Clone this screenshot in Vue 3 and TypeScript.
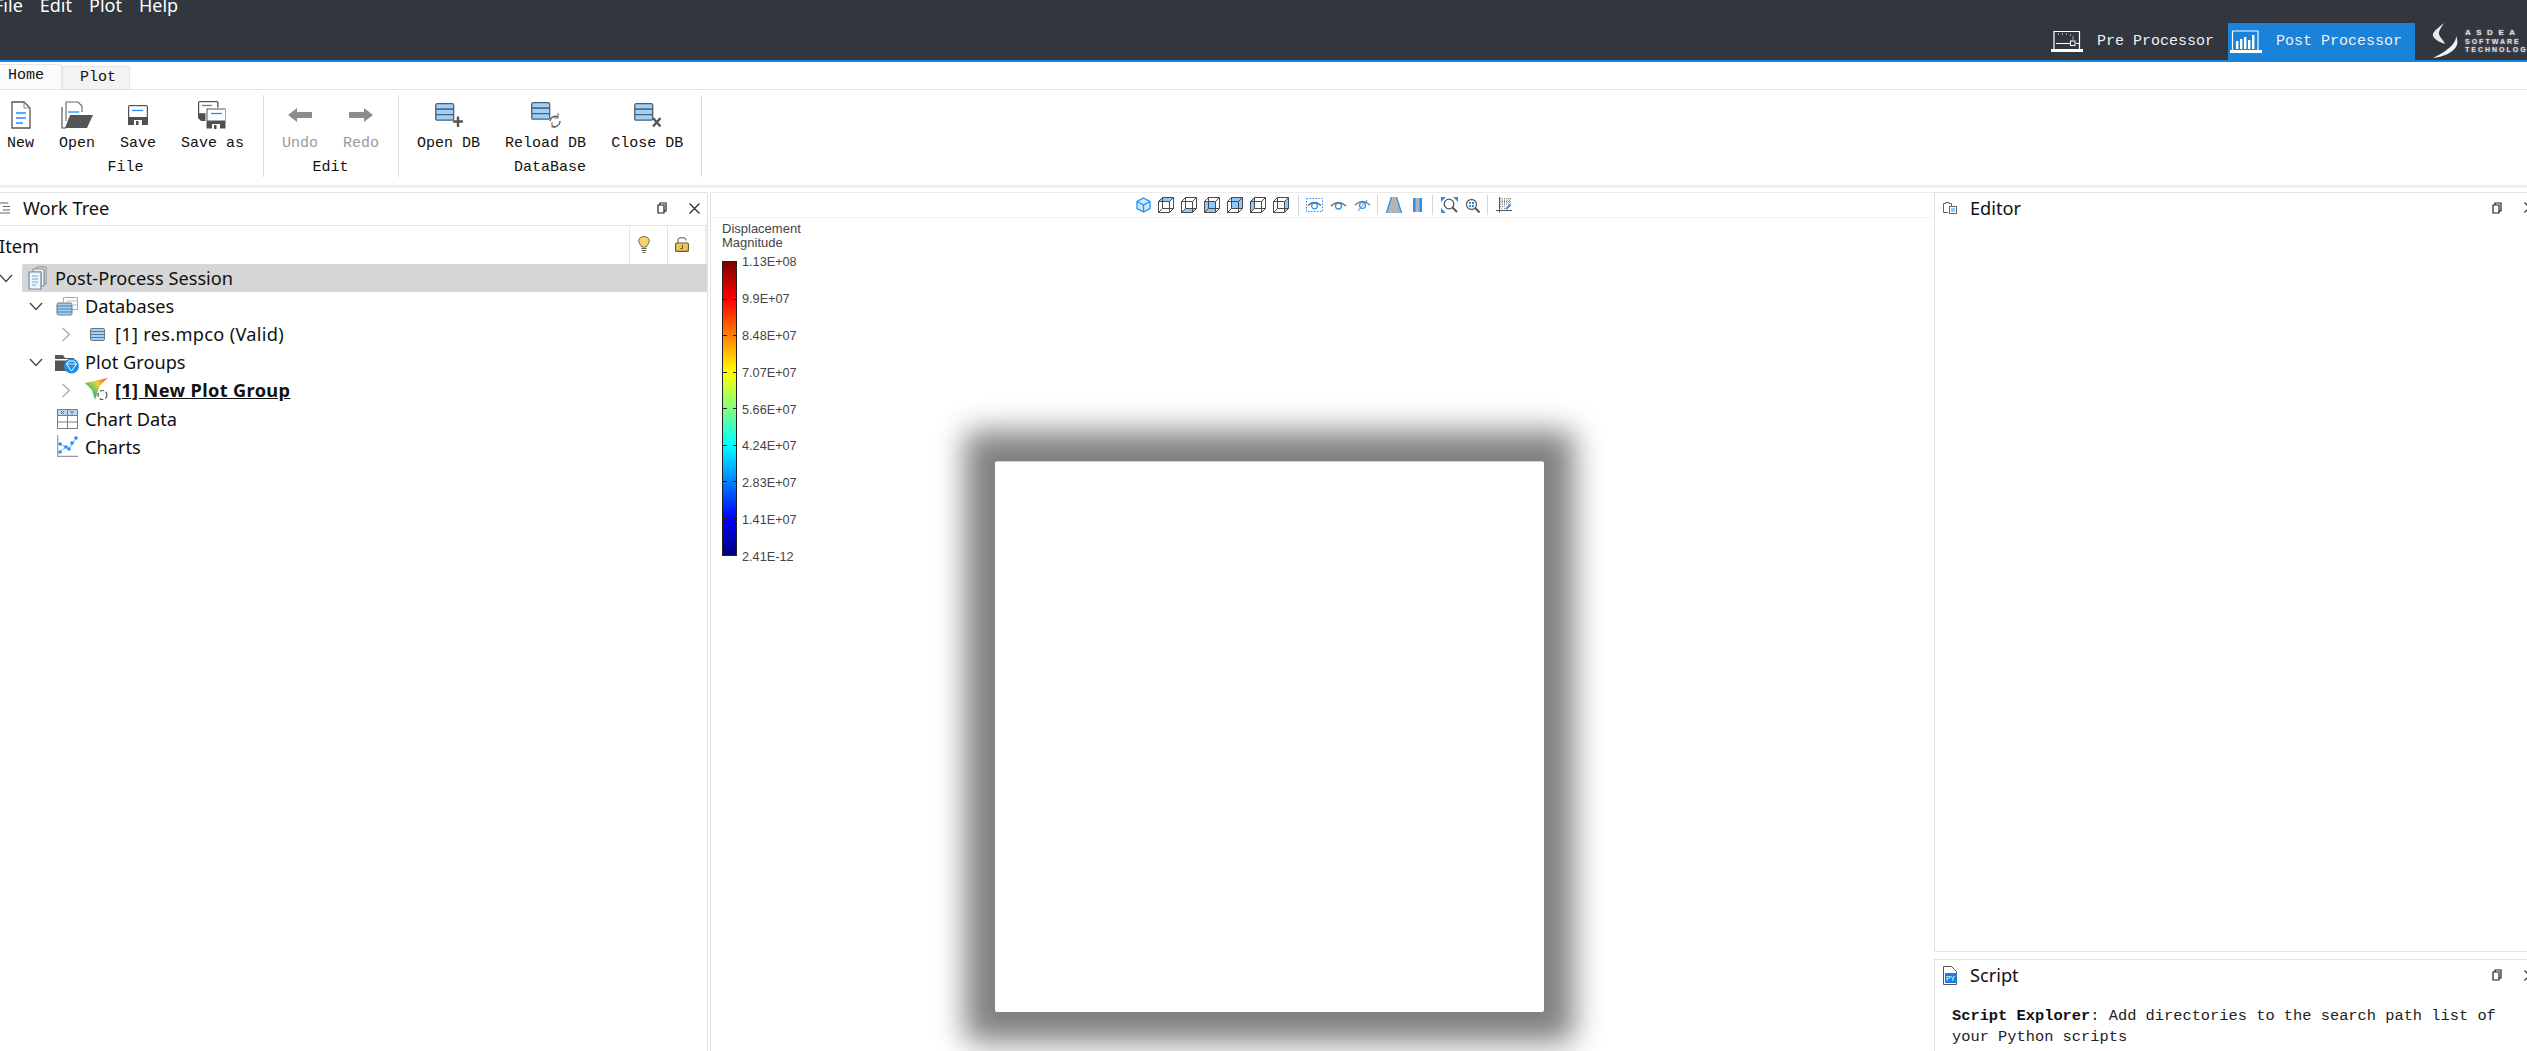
<script setup lang="ts">
const legend = ['1.13E+08', '9.9E+07', '8.48E+07', '7.07E+07', '5.66E+07', '4.24E+07', '2.83E+07', '1.41E+07', '2.41E-12']
const faces: string[] = [
  '4.500,0.500 15.500,0.500 11.500,4.500 0.500,4.500',
  '0.500,15.500 11.500,15.500 15.500,11.500 4.500,11.500',
  '0.500,4.500 11.500,4.500 11.500,15.500 0.500,15.500',
  '4.500,0.500 15.500,0.500 15.500,11.500 4.500,11.500',
  '0.500,4.500 4.500,0.500 4.500,11.500 0.500,15.500',
  '11.500,4.500 15.500,0.500 15.500,11.500 11.500,15.500',
]
</script>

<template>
  <div class="app">
    <header class="topbar">
      <nav class="menu"><span>File</span><span>Edit</span><span>Plot</span><span>Help</span></nav>
      <div class="modes">
        <div class="mode">
          <svg width="32" height="22" viewBox="0 0 32 22" class="mode-icon">
            <path d="M3 19V1.500H28.500V19" fill="none" stroke="#fff" stroke-width="1.200" />
            <path d="M0 19H32V22H0Z M4 19h4v1H4Z" fill="#fff" />
            <path d="M5 13.500H19M25 13.500H28" stroke="#fff" stroke-width="1" />
            <rect x="19.500" y="11" width="4.500" height="4.500" fill="none" stroke="#fff" stroke-width="1" />
            <path d="M7 4h1M11 4h1M15 4h1M19 5h1M21.500 7h1M21.500 9h1" stroke="#fff" stroke-width="1" />
          </svg>
          <span>Pre Processor</span>
        </div>
        <div class="mode active">
          <svg width="32" height="23" viewBox="0 0 32 23" class="mode-icon">
            <path d="M2.500 20V1H28V20" fill="none" stroke="#fff" stroke-width="1.200" />
            <path d="M0 20H32V23H0Z" fill="#fff" />
            <path d="M6 11h2.400v8H6Z M10 9h2.400v10H10Z M14 7h2.400v12H14Z M18 10h2.400v9H18Z M22 5h2.400v14H22Z" fill="#fff" />
          </svg>
          <span>Post Processor</span>
        </div>
        <div class="logo">
          <svg width="26" height="36" viewBox="0 0 26 36" class="logo-mark">
            <path d="M12 0C5 6 0 9 1 13C2 16 7 19 13 21C11 16 6 13 7 9C8 6 10 3 12 0Z" fill="#e8e8e8" />
            <path d="M24 13C25 20 14 29 1 35C10 34 22 30 25 22C26 18 25 15 24 13Z" fill="#f2f2f2" />
          </svg>
          <div class="logo-text">
            <span class="l1">ASDEA</span>
            <span class="l2">SOFTWARE</span>
            <span class="l2">TECHNOLOGY</span>
          </div>
        </div>
      </div>
    </header>

    <div class="tabs">
      <div class="tab on">Home</div>
      <div class="tab">Plot</div>
    </div>

    <section class="ribbon">
      <div class="group first">
        <div class="btns">
          <div class="btn">
            <div class="ico">
              <svg width="20" height="28" viewBox="0 0 20 28">
                <path d="M1 1H13L19 7V27H1Z" fill="#fff" stroke="#555" stroke-width="1.300" />
                <path d="M13 1V7H19" fill="none" stroke="#888" />
                <path d="M5 12H15M5 17H15M5 22H12" stroke="#1e90ff" stroke-width="1.300" />
              </svg>
            </div>
            <span>New</span>
          </div>
          <div class="btn">
            <div class="ico">
              <svg width="32" height="28" viewBox="0 0 32 28">
                <path d="M1 6V27H5" fill="none" stroke="#555" stroke-width="1.200" />
                <path d="M5 20V1H17L21 5V11" fill="#fff" stroke="#666" stroke-width="1.100" />
                <path d="M7 11H18" stroke="#1e90ff" stroke-width="1.300" />
                <path d="M9 14H32L26 27H4Z" fill="#555" />
              </svg>
            </div>
            <span>Open</span>
          </div>
          <div class="btn">
            <div class="ico">
              <svg width="20" height="20" viewBox="0 0 20 20">
                <path d="M0 1.500Q0 0 1.500 0H18.500Q20 0 20 1.500V20H0Z" fill="#505050" />
                <rect x="1.200" y="1.200" width="17.600" height="10.800" fill="#fff" />
                <path d="M4 5.500H15" stroke="#1e90ff" stroke-width="1.300" />
                <rect x="6" y="15" width="8" height="5" fill="#fff" />
                <rect x="8" y="16" width="2.500" height="4" fill="#505050" />
              </svg>
            </div>
            <span>Save</span>
          </div>
          <div class="btn">
            <div class="ico">
              <svg width="29" height="28" viewBox="0 0 29 28">
                <path d="M0 1.500Q0 0 1.500 0H19Q20.500 0 20.500 1.500V20H3L0 17Z" fill="#505050" />
                <rect x="1.200" y="1.200" width="18" height="11" fill="#fff" />
                <path d="M4 4.500H14" stroke="#1e90ff" stroke-width="1.300" />
                <path d="M8 8.500Q8 7 9.500 7H28V28H8Z" fill="#505050" stroke="#fff" stroke-width="1" />
                <rect x="9.500" y="8.500" width="17.500" height="11" fill="#fff" />
                <path d="M13 12.500H24" stroke="#1e90ff" stroke-width="1.300" />
                <rect x="14" y="23" width="8" height="5" fill="#fff" />
                <rect x="16" y="24" width="2.500" height="4" fill="#505050" />
              </svg>
            </div>
            <span>Save as</span>
          </div>
        </div>
        <div class="group-name">File</div>
      </div>

      <div class="group">
        <div class="btns">
          <div class="btn off">
            <div class="ico">
              <svg width="24" height="14" viewBox="0 0 24 14"><path d="M0 7L9 0V4H24V10H9V14Z" fill="#8c8c8c" /></svg>
            </div>
            <span>Undo</span>
          </div>
          <div class="btn off">
            <div class="ico">
              <svg width="24" height="14" viewBox="0 0 24 14"><path d="M24 7L15 0V4H0V10H15V14Z" fill="#8c8c8c" /></svg>
            </div>
            <span>Redo</span>
          </div>
        </div>
        <div class="group-name">Edit</div>
      </div>

      <div class="group last">
        <div class="btns">
          <div class="btn">
            <div class="ico">
              <svg width="28" height="24" viewBox="0 0 28 24">
                <rect x="0.700" y="0.700" width="18" height="5.500" rx="1.500" fill="#9ed0fa" stroke="#4f6070" stroke-width="1.300" />
                <rect x="0.700" y="6.200" width="18" height="5.500" fill="#9ed0fa" stroke="#4f6070" stroke-width="1.300" />
                <rect x="0.700" y="11.700" width="18" height="5.500" rx="1.500" fill="#9ed0fa" stroke="#4f6070" stroke-width="1.300" />
                <path d="M18 18.500H28M23 13.500V24" stroke="#555" stroke-width="2.400" />
              </svg>
            </div>
            <span>Open DB</span>
          </div>
          <div class="btn">
            <div class="ico">
              <svg width="30" height="26" viewBox="0 0 30 26">
                <rect x="0.700" y="0.700" width="18" height="5.500" rx="1.500" fill="#9ed0fa" stroke="#4f6070" stroke-width="1.300" />
                <rect x="0.700" y="6.200" width="18" height="5.500" fill="#9ed0fa" stroke="#4f6070" stroke-width="1.300" />
                <rect x="0.700" y="11.700" width="18" height="5.500" rx="1.500" fill="#9ed0fa" stroke="#4f6070" stroke-width="1.300" />
                <path d="M19 19A5.500 5.500 0 0 1 27 15M29 19A5.500 5.500 0 0 1 21 24" fill="none" stroke="#666" stroke-width="1.500" />
                <path d="M27 11V16H23M21 20V25H25" fill="none" stroke="#666" stroke-width="1" />
              </svg>
            </div>
            <span>Reload DB</span>
          </div>
          <div class="btn">
            <div class="ico">
              <svg width="27" height="24" viewBox="0 0 27 24">
                <rect x="0.700" y="0.700" width="18" height="5.500" rx="1.500" fill="#9ed0fa" stroke="#4f6070" stroke-width="1.300" />
                <rect x="0.700" y="6.200" width="18" height="5.500" fill="#9ed0fa" stroke="#4f6070" stroke-width="1.300" />
                <rect x="0.700" y="11.700" width="18" height="5.500" rx="1.500" fill="#9ed0fa" stroke="#4f6070" stroke-width="1.300" />
                <path d="M19 15L26.500 23.500M26.500 15L19 23.500" stroke="#555" stroke-width="2.400" />
              </svg>
            </div>
            <span>Close DB</span>
          </div>
        </div>
        <div class="group-name">DataBase</div>
      </div>
    </section>

    <main class="main">
      <section class="panel tree-panel">
        <div class="panel-head">
          <svg class="head-ico" width="22" height="12" viewBox="0 0 22 12">
            <path d="M11 1H19M14 4.500H21M14 8H21M11 11H21" stroke="#666" stroke-width="1" />
          </svg>
          <span class="panel-title">Work Tree</span>
          <svg class="restore" width="10" height="12" viewBox="0 0 10 12">
            <path d="M3 3V1H9V9H7M1 3H7V11H1Z" fill="none" stroke="#222" stroke-width="1.200" />
          </svg>
          <svg class="close" width="11" height="11" viewBox="0 0 11 11"><path d="M0.500 0.500L10.500 10.500M10.500 0.500L0.500 10.500" stroke="#222" stroke-width="1.100" /></svg>
        </div>
        <div class="col-head">
          <div class="col-item">Item</div>
          <div class="col-cell">
            <svg width="12" height="17" viewBox="0 0 12 17">
              <path d="M6 0.600C2.500 0.600 0.700 2.600 0.700 5C0.700 7.500 3 8.500 3.500 11H8.500C9 8.500 11.300 7.500 11.300 5C11.300 2.600 9.500 0.600 6 0.600Z" fill="#f7d36b" stroke="#6b6b4f" stroke-width="1" />
              <path d="M3.500 12.500H8.500M3.500 14.500H8.500M4.500 16.500H7.500" stroke="#666" stroke-width="1" />
            </svg>
          </div>
          <div class="col-cell">
            <svg width="14" height="15" viewBox="0 0 14 15">
              <path d="M3 6V3.500C3 1.500 5 0.600 7 0.600C9 0.600 11 1.500 11 3.500" fill="none" stroke="#777" stroke-width="1.200" />
              <rect x="0.600" y="6" width="12.800" height="8.400" rx="1" fill="#ecc55e" stroke="#6b5a2a" stroke-width="1.100" />
              <path d="M7.500 8V11.500H5.500" fill="none" stroke="#5a4a20" stroke-width="1" />
            </svg>
          </div>
        </div>

        <div class="row d0">
          <svg class="chev" width="14" height="9" viewBox="0 0 14 9"><path d="M1 1L7 7.500L13 1" fill="none" stroke="#444" stroke-width="1.300" /></svg>
          <div class="row-body selected">
            <svg class="node-ico" width="24" height="24" viewBox="0 0 24 24">
              <path d="M13 1H22V18H20V4H13Z" fill="#f4f4f4" stroke="#7c8894" stroke-width="1" />
              <path d="M9 3H20V20H17V6H9Z" fill="#f4f4f4" stroke="#7c8894" stroke-width="1" />
              <path d="M5 6H17V23H5Z" fill="#eef5fb" stroke="#6f8ca8" stroke-width="1.200" />
              <path d="M8 10H14M8 13H14M8 16H14M8 19H12" stroke="#6fa8dc" stroke-width="1" />
            </svg>
            <span>Post-Process Session</span>
          </div>
        </div>

        <div class="row d1">
          <svg class="chev" width="14" height="9" viewBox="0 0 14 9"><path d="M1 1L7 7.500L13 1" fill="none" stroke="#444" stroke-width="1.300" /></svg>
          <div class="row-body">
            <svg class="node-ico" width="24" height="24" viewBox="0 0 24 24">
              <path d="M9.500 8V3.500H23.500V15.500H18" fill="#fff" stroke="#aaa" stroke-width="1" />
              <path d="M13 7H23M19 11H23" stroke="#bbb" stroke-width="1" />
              <rect x="3" y="9" width="15" height="12" rx="1.500" fill="#9ed0fa" stroke="#64788c" stroke-width="1" />
              <path d="M3 12H18M3 15H18M3 18H18" stroke="#64788c" stroke-width="1" />
            </svg>
            <span>Databases</span>
          </div>
        </div>

        <div class="row d2">
          <svg class="chev" width="9" height="15" viewBox="0 0 9 15"><path d="M1 1L8 7.500L1 14" fill="none" stroke="#aaa" stroke-width="1.300" /></svg>
          <div class="row-body">
            <svg class="node-ico" width="24" height="24" viewBox="0 0 24 24">
              <rect x="6.500" y="6.500" width="14" height="12" rx="1.500" fill="#9ed0fa" stroke="#64788c" stroke-width="1" />
              <path d="M6.500 9.500H20.500M6.500 12.500H20.500M6.500 15.500H20.500" stroke="#64788c" stroke-width="1" />
            </svg>
            <span class="wide">[1] res.mpco (Valid)</span>
          </div>
        </div>

        <div class="row d1">
          <svg class="chev" width="14" height="9" viewBox="0 0 14 9"><path d="M1 1L7 7.500L13 1" fill="none" stroke="#444" stroke-width="1.300" /></svg>
          <div class="row-body">
            <svg class="node-ico" width="25" height="24" viewBox="0 0 25 24">
              <path d="M1 5H9L11 8H20V21H1Z" fill="#555" />
              <path d="M1 9H20V10.500H1Z" fill="#fff" />
              <circle cx="17.500" cy="16" r="7.500" fill="#1e90e8" />
              <path d="M12.500 14L15 11H20L22.500 14L17.500 21Z" fill="none" stroke="#fff" stroke-width="1" />
              <path d="M12.500 14H22.500" stroke="#fff" stroke-width="0.800" />
            </svg>
            <span>Plot Groups</span>
          </div>
        </div>

        <div class="row d2">
          <svg class="chev" width="9" height="15" viewBox="0 0 9 15"><path d="M1 1L8 7.500L1 14" fill="none" stroke="#aaa" stroke-width="1.300" /></svg>
          <div class="row-body">
            <svg class="node-ico" width="24" height="24" viewBox="0 0 24 24">
              <defs>
                <linearGradient id="wing" x1="1" y1="0" x2="0" y2="1">
                  <stop offset="0" stop-color="#f04030" />
                  <stop offset="0.350" stop-color="#f0d040" />
                  <stop offset="0.650" stop-color="#50c060" />
                  <stop offset="1" stop-color="#2080e0" />
                </linearGradient>
              </defs>
              <path d="M1 5L24 0C20 3 17 6 15 10L11 22L8 12Z" fill="url(#wing)" />
              <circle cx="18.500" cy="17" r="4.500" fill="#fff" stroke="#555" stroke-width="1.200" stroke-dasharray="4 2" />
            </svg>
            <span class="bold">[1] New Plot Group</span>
          </div>
        </div>

        <div class="row d1">
          <span class="chev-gap"></span>
          <div class="row-body">
            <svg class="node-ico" width="24" height="24" viewBox="0 0 24 24">
              <rect x="3.500" y="2.500" width="20" height="6" fill="#b9d7f2" />
              <rect x="3.500" y="2.500" width="20" height="19" fill="none" stroke="#7d7d7d" stroke-width="1" />
              <path d="M3.500 8.500H23.500M3.500 15H23.500M13.500 2.500V21.500" stroke="#7d7d7d" stroke-width="1" />
              <path d="M7 4L10 7M10 4L7 7M16 4L18 5.500L20 4M18 5.500V7.500" stroke="#555" stroke-width="0.800" fill="none" />
            </svg>
            <span>Chart Data</span>
          </div>
        </div>

        <div class="row d1">
          <span class="chev-gap"></span>
          <div class="row-body">
            <svg class="node-ico" width="24" height="24" viewBox="0 0 24 24">
              <path d="M3.700 0V21.300H24" fill="none" stroke="#999" stroke-width="1.200" />
              <path d="M6 17L12 12L15 14L22 3M6 9L12 12" fill="none" stroke="#6cb0ea" stroke-width="1" />
              <circle cx="6" cy="17" r="1.800" fill="#1e90ff" />
              <circle cx="6" cy="9" r="1.800" fill="#1e90ff" />
              <circle cx="12" cy="12" r="1.800" fill="#1e90ff" />
              <circle cx="15" cy="14" r="1.800" fill="#1e90ff" />
              <circle cx="18" cy="8" r="1.800" fill="#1e90ff" />
              <circle cx="22" cy="3" r="1.800" fill="#1e90ff" />
            </svg>
            <span>Charts</span>
          </div>
        </div>
      </section>

      <section class="view">
        <div class="view-bar">
          <svg width="15" height="16" viewBox="0 0 15 16" class="vb">
            <path d="M7.500 1L14 4.500V11.500L7.500 15L1 11.500V4.500Z" fill="#cfe6fb" stroke="#2a90ef" stroke-width="1.300" />
            <path d="M1 4.500L7.500 8L14 4.500M7.500 8V15" fill="none" stroke="#2a90ef" stroke-width="1.300" />
          </svg>
          <svg v-for="(f, i) in faces" :key="i" width="16" height="16" viewBox="0 0 16 16" class="vb box">
            <polygon :points="f" fill="#90c8fa" />
            <path d="M0.500 4.500H11.500V15.500H0.500ZM4.500 0.500H15.500V11.500H4.500ZM0.500 4.500L4.500 0.500M11.500 4.500L15.500 0.500M11.500 15.500L15.500 11.500M0.500 15.500L4.500 11.500" fill="none" stroke="#4a4a4a" stroke-width="1" />
          </svg>
          <i class="sep s1"></i>
          <svg width="17" height="14" viewBox="0 0 17 14" class="vb">
            <rect x="0.500" y="0.500" width="16" height="13" fill="none" stroke="#1e90ff" stroke-width="1" stroke-dasharray="1.500 1.500" />
            <path d="M2 7.500Q8.500 1.500 15 7.500" fill="none" stroke="#666" stroke-width="1.200" />
            <circle cx="8.500" cy="8" r="2.800" fill="none" stroke="#2a90ef" stroke-width="1.200" />
          </svg>
          <svg width="17" height="10" viewBox="0 0 17 10" class="vb">
            <path d="M1 6Q8.500 -1 16 6" fill="none" stroke="#666" stroke-width="1.300" />
            <circle cx="8.500" cy="6" r="3" fill="none" stroke="#2a90ef" stroke-width="1.300" />
          </svg>
          <svg width="17" height="12" viewBox="0 0 17 12" class="vb">
            <path d="M1 6Q8.500 -1 16 6" fill="none" stroke="#777" stroke-width="1.200" />
            <circle cx="8.500" cy="6.500" r="3" fill="none" stroke="#2a90ef" stroke-width="1.200" />
            <path d="M4 12L13 1" stroke="#2a90ef" stroke-width="1" />
          </svg>
          <i class="sep s2"></i>
          <svg width="16" height="16" viewBox="0 0 16 16" class="vb road">
            <path d="M5 0H11L16 16H0Z" fill="#b4b4b4" />
            <path d="M5.500 0L0.500 16M10.500 0L15.500 16" stroke="#2a90ef" stroke-width="1.300" />
          </svg>
          <svg width="9" height="14" viewBox="0 0 9 14" class="vb bar">
            <rect width="9" height="14" fill="#b4b4b4" />
            <rect width="2.500" height="14" fill="#2a90ef" />
            <rect x="6.500" width="2.500" height="14" fill="#2a90ef" />
          </svg>
          <i class="sep s3"></i>
          <svg width="17" height="16" viewBox="0 0 17 16" class="vb">
            <path d="M0 0H5L0 5ZM12 0H17V5ZM0 11L5 16H0Z" fill="#2a90ef" />
            <circle cx="8" cy="7" r="4.800" fill="none" stroke="#555" stroke-width="1.300" />
            <path d="M11.500 10.500L16 15" stroke="#555" stroke-width="2" />
          </svg>
          <svg width="15" height="15" viewBox="0 0 15 15" class="vb">
            <circle cx="6.500" cy="6.500" r="5" fill="none" stroke="#666" stroke-width="1.300" />
            <path d="M10 10L14.500 14.500" stroke="#555" stroke-width="2" />
            <rect x="4" y="4" width="2" height="2" fill="#2a90ef" />
            <rect x="7" y="4" width="2" height="2" fill="#2a90ef" />
            <rect x="4" y="7" width="2" height="2" fill="#2a90ef" />
            <rect x="7" y="7" width="2" height="2" fill="#2a90ef" />
          </svg>
          <i class="sep s4"></i>
          <svg width="16" height="16" viewBox="0 0 16 16" class="vb">
            <path d="M3.500 0V15.500M0 13.500H16" stroke="#555" stroke-width="1" />
            <path d="M6 1V12M8.500 1V12M11 1V7M13.500 1V7M4 2H15M4 4.500H15M4 7H15M4 9.500H9" stroke="#888" stroke-width="1" stroke-dasharray="1 1" />
            <path d="M10 12L14.500 7.500" stroke="#2a90ef" stroke-width="2" />
          </svg>
        </div>
        <div class="canvas">
          <div class="legend">
            <div class="legend-title">Displacement<br />Magnitude</div>
            <div class="legend-body">
              <div class="jet">
                <i v-for="l in legend" :key="l" class="tick"></i>
              </div>
              <div class="legend-labels">
                <span v-for="l in legend" :key="l">{{ l }}</span>
              </div>
            </div>
          </div>
          <div class="sheet"></div>
        </div>
      </section>

      <aside class="side">
        <section class="panel editor">
          <div class="panel-head">
            <svg class="head-ico2" width="14" height="12" viewBox="0 0 14 12">
              <path d="M5 10.500H0.500V1.500H3V0.500H6V1.500H8.500V4" fill="none" stroke="#666" stroke-width="1" />
              <rect x="6.500" y="4.500" width="7" height="7" fill="#fff" stroke="#666" stroke-width="1" />
              <path d="M8 7H12M8 9H12" stroke="#1e90ff" stroke-width="1" />
            </svg>
            <span class="panel-title">Editor</span>
            <svg class="restore" width="10" height="12" viewBox="0 0 10 12">
              <path d="M3 3V1H9V9H7M1 3H7V11H1Z" fill="none" stroke="#222" stroke-width="1.200" />
            </svg>
            <svg class="close" width="11" height="11" viewBox="0 0 11 11"><path d="M0.500 0.500L10.500 10.500M10.500 0.500L0.500 10.500" stroke="#222" stroke-width="1.100" /></svg>
          </div>
        </section>
        <section class="panel script">
          <div class="panel-head">
            <svg class="head-ico2" width="14" height="19" viewBox="0 0 14 19">
              <path d="M0.500 0.500H8.500L13.500 5.500V18.500H0.500Z" fill="#fff" stroke="#555" stroke-width="1" />
              <rect x="2" y="7" width="12" height="10" fill="#1c7fdb" />
              <text x="3" y="15" font-size="7.500" fill="#fff" font-family="Liberation Mono, monospace">PY</text>
            </svg>
            <span class="panel-title">Script</span>
            <svg class="restore" width="10" height="12" viewBox="0 0 10 12">
              <path d="M3 3V1H9V9H7M1 3H7V11H1Z" fill="none" stroke="#222" stroke-width="1.200" />
            </svg>
            <svg class="close" width="11" height="11" viewBox="0 0 11 11"><path d="M0.500 0.500L10.500 10.500M10.500 0.500L0.500 10.500" stroke="#222" stroke-width="1.100" /></svg>
          </div>
          <p class="script-text"><b>Script Explorer</b>: Add directories to the search path list of your Python scripts</p>
        </section>
      </aside>
    </main>
  </div>
</template>

<style>
html, body { margin: 0; background: #fff; overflow: hidden; }
</style>

<style scoped>
.app {
  width: 2551px;
  height: 1051px;
  margin-left: -12px;
  display: flex;
  flex-direction: column;
  overflow: hidden;
  background: #fff;
  color: #111;
  font-family: "Noto Sans", sans-serif;
}
.topbar {
  height: 60px;
  flex: none;
  background: #31363f;
  border-bottom: 2px solid #1a82d8;
  display: flex;
  justify-content: space-between;
}
.menu {
  display: flex;
  gap: 17px;
  padding-left: 6px;
  margin-top: -7.500px;
  color: #fff;
  font-size: 18px;
  line-height: 24px;
}
.modes { display: flex; align-items: flex-end; }
.mode {
  height: 37px;
  display: flex;
  align-items: center;
  color: #f0f0f0;
  font: 15px "Liberation Mono", monospace;
  padding-right: 14px;
}
.mode-icon { margin-top: -1px; margin-right: 14px; }
.mode.active { background: #1a82d8; width: 187px; padding: 0 0 0 2px; box-sizing: border-box; }
.logo { display: flex; width: 124px; height: 37px; padding-left: 17px; box-sizing: border-box; color: #ddd; }
.logo-mark { flex: none; filter: blur(0.400px); }
.logo-text { display: flex; flex-direction: column; margin: 6px 0 0 7px; font: bold 8px/8px "Liberation Sans", sans-serif; white-space: nowrap; text-shadow: 0 0 2px rgba(255, 255, 255, 0.500); }
.l1 { letter-spacing: 5.500px; margin-bottom: 1px; }
.l2 { letter-spacing: 2px; font-size: 7px; }

.tabs {
  height: 28px;
  flex: none;
  display: flex;
  align-items: flex-end;
  border-bottom: 1px solid #e2e2e2;
  box-sizing: border-box;
  font: 15px/22px "Liberation Mono", monospace;
}
.tab {
  width: 68px;
  height: 23px;
  box-sizing: border-box;
  padding-left: 17px;
  background: #f3f3f3;
  border: 1px solid #e6e6e6;
  border-bottom: 0;
}
.tab.on { width: 74px; height: 25px; padding-left: 19px; background: #fbfbfb; border-radius: 2px 2px 0 0; }

.ribbon {
  height: 98px;
  flex: none;
  box-sizing: border-box;
  padding-top: 5px;
  display: flex;
  align-items: flex-start;
  border-bottom: 3px solid #efefef;
  font: 15px/18px "Liberation Mono", monospace;
}
.group {
  height: 82px;
  padding: 0 6px;
  border-right: 1px solid #dcdcdc;
  text-align: center;
}
.group.first { padding-left: 6.500px; }
.group.last { padding-right: 5px; }
.btns { display: flex; height: 64px; }
.btn { padding: 0 12.500px; white-space: pre; }
.btn.off { color: #9a9a9a; }
.ico { height: 40px; display: flex; align-items: center; justify-content: center; }
.group-name { line-height: 18px; }

.main { flex: 1; min-height: 0; display: flex; padding-top: 4px; }
.panel { border: 2px solid #e2e2e2; border-width: 1px 1px 0 1px; box-sizing: border-box; background: #fff; }
.tree-panel { width: 720px; flex: none; font-size: 18.200px; }
.panel-head {
  height: 33px;
  padding-bottom: 2px;
  display: flex;
  align-items: center;
  border-bottom: 1px solid #e2e2e2;
  box-sizing: border-box;
}
.head-ico { flex: none; }
.head-ico2 { margin-left: 8px; flex: none; }
.panel-title { font-size: 18.200px; margin-left: 12px; flex: 1; }
.restore { flex: none; margin-right: 22px; }
.close { flex: none; margin-right: 7px; }
.col-head {
  height: 38px;
  display: flex;
  border-right: 2px solid #ececec;
  align-items: stretch;
}
.col-item { flex: 1; padding-left: 10px; line-height: 40px; font-size: 18.200px; }
.col-cell {
  width: 38px;
  box-sizing: border-box;
  padding: 0 9px 2px 0;
  border-left: 1px solid #e4e4e4;
  display: flex;
  align-items: center;
  justify-content: center;
}
.row { height: 28.100px; display: flex; align-items: center; box-sizing: border-box; }
.d0 { padding-left: 7px; }
.d1 { padding-left: 37px; }
.d2 { padding-left: 67px; }
.chev { width: 20px; flex: none; }
.chev-gap { width: 20px; flex: none; }
.row-body { flex: 1; height: 100%; display: flex; align-items: center; padding-left: 2px; margin-left: 6px; border-radius: 2px 0 0 2px; }
.row-body span { margin-left: 7px; white-space: nowrap; }
.node-ico { flex: none; }
.node-ico[width="25"] { margin-right: -1px; }
.selected { background: #d6d6d6; }
.wide { letter-spacing: 0.300px; }
.bold { font-weight: 700; text-decoration: underline; letter-spacing: 0.350px; }

.view { width: 1224px; flex: none; margin-left: 2px; border-left: 1px solid #e2e2e2; box-sizing: border-box; display: flex; flex-direction: column; }
.view-bar {
  height: 26px;
  flex: none;
  box-sizing: border-box;
  padding-left: 425px;
  display: flex;
  align-items: center;
  gap: 7px;
  border-top: 1px solid #ececec;
  border-bottom: 1px solid #f2f2f2;
}
.sep { width: 1px; height: 20px; background: #d6d6d6; flex: none; }
.s1 { margin: 0 0 0 2px; }
.s2 { margin: 0 1px 0 -1px; }
.s3 { margin: 0 1px 0 3px; }
.s4 { margin: 0 1px 0 0; }
.bar { margin-left: 4px; }
.vb { flex: none; }
.canvas { flex: 1; min-height: 0; position: relative; padding: 243px 0 0 284px; }
.legend { position: absolute; left: 11px; top: 4px; font: 13px/14px "Liberation Sans", sans-serif; color: #444; }
.legend-title { height: 32px; }
.legend-body { display: flex; margin-top: 7px; }
.jet {
  width: 15px;
  height: 295px;
  box-sizing: border-box;
  border: 1px solid #222;
  background: linear-gradient(180deg, #7f0000 0%, #ff0000 12.500%, #ff8000 25%, #ffff00 37.500%, #80ff80 50%, #00ffff 62.500%, #0080ff 75%, #0000ff 87.500%, #00007f 100%);
  display: flex;
  flex-direction: column;
  justify-content: space-between;
}
.tick { display: block; height: 1px; margin: 0 -1px; background: linear-gradient(90deg, #222 0 5px, transparent 5px 11px, #222 11px); }
.tick:first-child, .tick:last-child { background: none; }
.legend-labels {
  height: 309px;
  margin: -6px 0 0 5px;
  display: flex;
  flex-direction: column;
  justify-content: space-between;
  font-size: 12.700px;
}
.sheet {
  width: 549px;
  height: 551px;
  background: #fff;
  border-top: 1px solid #d0d0d0;
  box-sizing: border-box;
  border-radius: 2px;
  box-shadow: 0 0 30px 30px #808080;
}

.side { width: 609px; flex: none; display: flex; flex-direction: column; gap: 7px; }
.editor { height: 760px; border-bottom-width: 1px; flex: none; }
.editor .panel-head { border-bottom: 0; padding-bottom: 4px; }
.script { flex: 1; }
.script .panel-head { border-bottom: 0; height: 32px; }
.side .panel-title { margin-left: 13px; }
.script-text {
  margin: 14px 0 0 17px;
  width: 560px;
  font: 15.360px/21px "Liberation Mono", monospace;
  color: #222;
}
.script-text b { font-weight: 700; color: #111; }
</style>
